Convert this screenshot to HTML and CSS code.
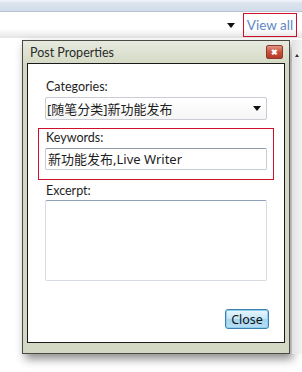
FILE: index.html
```html
<!DOCTYPE html>
<html lang="zh-CN">
<head>
  <meta charset="UTF-8" />
  <title>Post Properties</title>
  <link rel="stylesheet" href="styles.css">
</head>
<body>
  <div class="toolbar"></div>

  <div class="field-row">
    <div class="field">
      <span class="arrow"></span>
    </div>
    <a class="view-all" href="#">View all</a>
  </div>

  <div class="stage">
    <div class="dialog">
      <div class="title-bar">
        <span class="title">Post Properties</span>
        <span class="close-x">&#x2716;</span>
      </div>
      <div class="content">
        <label class="label">Categories:</label>
        <div class="select">
          <span>[随笔分类]新功能发布</span>
          <span class="arrow"></span>
        </div>

        <div class="highlight">
          <label class="label">Keywords:</label>
          <div class="textbox">新功能发布,Live Writer</div>
        </div>

        <label class="label">Excerpt:</label>
        <div class="textarea"></div>

        <div class="actions">
          <button class="close-btn">Close</button>
        </div>
      </div>
    </div>
    <div class="scroll">
      <span class="scroll-arrow"></span>
    </div>
  </div>
</body>
</html>
```

FILE: styles.css
```css
body {
  margin: 0;
  width: 302px;
  height: 372px;
  overflow: hidden;
  background-color: #fff;
  font-family: Lato, 'Noto Sans CJK SC', sans-serif;
  font-size: 12.5px;
  color: #1e1e1e;
}

.toolbar {
  height: 11px;
  background: linear-gradient(#f3f6fa, #dbe3ee 30%, #d3dcea);
  border-bottom: 1px solid #b7c2d2;
}

.field-row {
  display: flex;
  align-items: center;
  height: 26px;
  background: linear-gradient(#fff 65%, #e4e4e4);
}

.field {
  flex: 1;
  height: 22px;
  display: flex;
  align-items: center;
  justify-content: flex-end;
  padding-right: 8px;
}

.arrow {
  width: 0;
  height: 0;
  border-left: 4px solid transparent;
  border-right: 4px solid transparent;
  border-top: 5px solid #111;
}

.view-all {
  width: 52px;
  height: 22px;
  margin-right: 5px;
  border: 1px solid #d0102a;
  color: #5f86c8;
  font-size: 13.5px;
  line-height: 22px;
  text-align: center;
  text-decoration: none;
}

.stage {
  display: flex;
  margin-top: 2px;
  padding-left: 22px;
}

.dialog {
  width: 258px;
  padding: 0 4px 4px;
  background-color: #d3d8c4;
  border: 1px solid #4a4a42;
  box-shadow: 3px 5px 9px rgba(0, 0, 0, 0.45);
}

.title-bar {
  height: 22px;
  display: flex;
  align-items: center;
  justify-content: space-between;
  background: linear-gradient(#e7eadf, #d5dbc6);
  margin: 0 -4px;
  padding: 0 6px 0 7px;
}

.title {
  color: #2a2a2a;
}

.close-x {
  width: 15px;
  height: 12px;
  border-radius: 2px;
  background: linear-gradient(#e19483, #c9513c 50%, #b63a26);
  border: 1px solid #8e3a2c;
  color: #fff;
  font-size: 8px;
  line-height: 12px;
  text-align: center;
  font-weight: bold;
}

.content {
  height: 263px;
  background-color: #fff;
  border: 1px solid #1a1a1a;
  padding: 15px 17px 0 17px;
  display: flex;
  flex-direction: column;
}

.label {
  display: block;
  line-height: 16px;
  padding-left: 1px;
}

.select {
  height: 21px;
  margin-top: 2px;
  border: 1px solid #c9ccd2;
  border-radius: 2px;
  background: linear-gradient(#fff, #f6f6f6);
  display: flex;
  align-items: center;
  justify-content: space-between;
  padding: 0 5px 0 1px;
  font-family: 'Noto Sans', 'Noto Sans CJK SC', sans-serif;
  font-size: 13px;
}

.highlight {
  margin: 8px -7px 0;
  padding: 1px 6px 9px;
  border: 1px solid #d0102a;
}

.textbox {
  height: 20px;
  margin-top: 2px;
  border: 1px solid #c4ccd6;
  border-top-color: #8e9aa8;
  border-radius: 2px;
  line-height: 20px;
  padding-left: 2px;
  font-family: 'Noto Sans', 'Noto Sans CJK SC', sans-serif;
  font-size: 13px;
}

.highlight + .label {
  margin-top: 3px;
}

.textarea {
  height: 79px;
  margin-top: 1px;
  border: 1px solid #d6dbe2;
  border-top-color: #8ea0b6;
  border-radius: 2px;
}

.actions {
  display: flex;
  justify-content: flex-end;
  margin-top: 28px;
  margin-right: -2px;
}

.close-btn {
  width: 44px;
  height: 20px;
  padding: 0;
  font-family: 'Noto Sans', sans-serif;
  font-size: 12.5px;
  color: #111;
  border: 1px solid #3c7fb1;
  border-radius: 3px;
  background: linear-gradient(#e9f6fd, #c6e6f7 50%, #a5d6f1 51%, #b9def3);
  box-shadow: inset 0 0 0 1px #8fd0ee;
}

.scroll {
  width: 10px;
  height: 300px;
  margin-left: 2px;
  background: linear-gradient(90deg, #e2e2e2, #f3f3f3);
  display: flex;
  justify-content: center;
  padding-top: 14px;
}

.scroll-arrow {
  width: 0;
  height: 0;
  border-left: 2px solid transparent;
  border-right: 2px solid transparent;
  border-bottom: 3px solid #333;
}
```
